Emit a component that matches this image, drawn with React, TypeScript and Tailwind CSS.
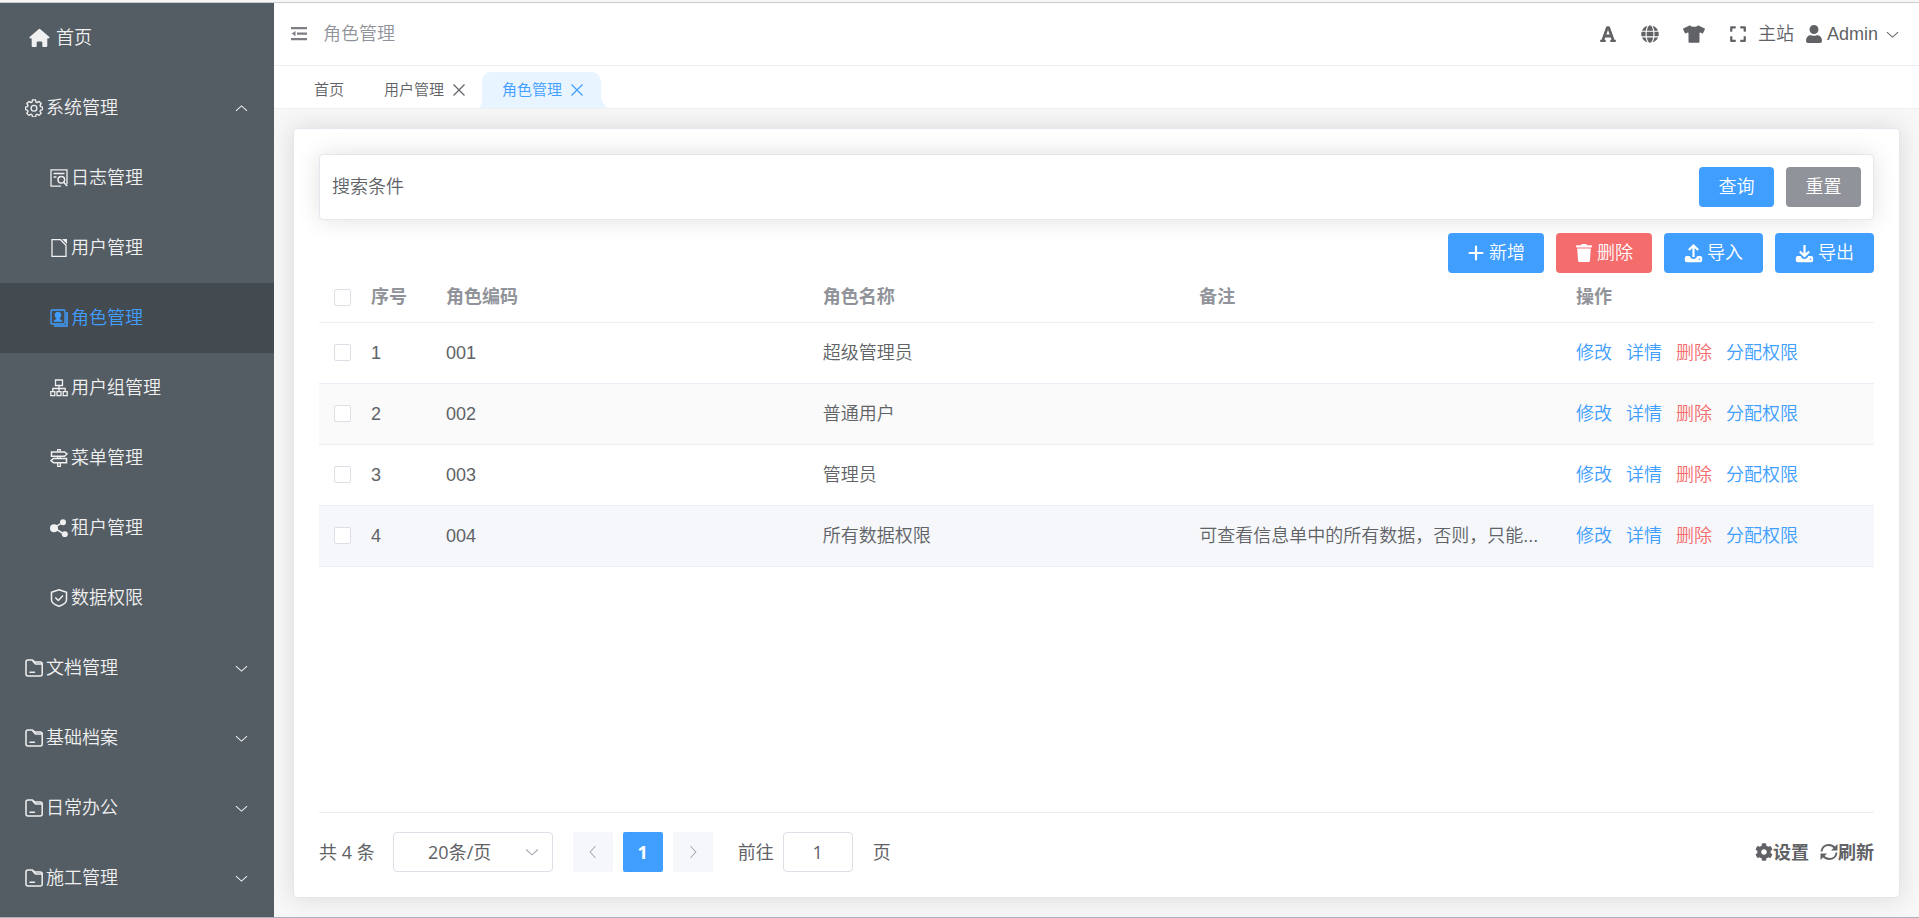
import type { ReactNode } from 'react';
import { FaFont, FaGlobe, FaTshirt, FaExpand, FaUser, FaTrash, FaCog } from 'react-icons/fa';

type IconProps = { className?: string };

const line = {
  viewBox: '0 0 18 18',
  fill: 'none',
  stroke: 'currentColor',
  strokeWidth: 1.3,
  'aria-hidden': true,
} as const;

function HomeIcon() {
  return (
    <svg viewBox="0 0 21 20" fill="currentColor" className="h-5 w-[21px]" aria-hidden>
      <path d="M9.6 1.2a1.4 1.4 0 0 1 1.8 0l8.7 7.6c.8.7.4 1.7-.6 1.7h-1.2v7.2c0 .9-.5 1.4-1.4 1.4h-2.6c-.6 0-1-.4-1-1v-3.4c0-.8-.5-1.3-1.2-1.3H9c-.8 0-1.3.5-1.3 1.3v3.4c0 .6-.4 1-1 1H4.1c-.9 0-1.4-.5-1.4-1.4v-7.2H1.500c-1 0-1.400-1-.6-1.700z" />
    </svg>
  );
}

function GearIcon() {
  return (
    <svg {...line} className="size-[18px]" viewBox="0 0 20 20" strokeWidth={1.5} strokeLinejoin="round">
      <path d="M8.300 1h3.400l.5 2.400 1.300.6 2.100-1.300 2.400 2.400-1.300 2.100.6 1.300 2.200.5v2.800l-2.200.6-.6 1.300 1.300 2.200-2.400 2.300-2.100-1.300-1.300.6-.5 2.300H8.300l-.5-2.300-1.300-.6-2.100 1.300L2 15.900l1.300-2.200-.6-1.300-2.200-.6V9l2.200-.5.6-1.300L2 5.100l2.400-2.400L6.500 4l1.300-.6z" />
      <circle cx="10" cy="10.300" r="3.200" />
    </svg>
  );
}

function LogIcon() {
  return (
    <svg {...line} className="size-[18px]">
      <path d="M11 17.200H1V.800h16v14.400" />
      <path d="M3.500 4.500h11M3.500 8h3" />
      <circle cx="11.300" cy="10.800" r="3.300" strokeWidth="1.500" />
      <path d="m13.600 13.300 3.600 3.700" strokeWidth="1.600" />
    </svg>
  );
}

function PageIcon() {
  return (
    <svg {...line} className="size-[18px]">
      <path d="M10.500.700H2v16.600h14V6.200z" />
      <path d="M12 0h5v5z" fill="currentColor" stroke="none" />
    </svg>
  );
}

function RoleIcon() {
  return (
    <svg {...line} className="size-[18px]">
      <rect x="1" y="1" width="14" height="14" rx="1" />
      <path d="M17 3v14H4" strokeWidth="1.600" />
      <path d="M8 2.800c2 0 3.300 1.400 3.300 3.300 0 1.600-.8 2.600-1.700 3.200l.2 1c1.200.3 2.400.9 2.600 2.400H3.600c.2-1.500 1.400-2.100 2.600-2.400l.2-1C5.500 8.700 4.700 7.700 4.700 6.100c0-1.900 1.300-3.300 3.300-3.300z" fill="currentColor" stroke="none" />
    </svg>
  );
}

function GroupIcon() {
  return (
    <svg {...line} className="size-[18px]">
      <path d="M5.500 1h7v5.500h-7zM9 6.500v3M2.800 12.500V9.500h12.400v3M9 9.500v3" />
      <path d="M.800 12.700h4v4h-4zM7 12.700h4v4H7zM13.200 12.700h4v4h-4z" />
    </svg>
  );
}

function SignIcon() {
  return (
    <svg {...line} className="size-[18px]">
      <path d="M1.500 3h13L17 5l-2.500 2.200h-13zM16.500 9.500H3.500L1 11.600l2.500 2.100h13z" strokeWidth="1.500" />
      <path d="M7.700 2.800V.700h2.600v2.100M7.700 7.200v2.300M10.300 7.200v2.300M7.700 13.700v3.600h2.600v-3.600" />
    </svg>
  );
}

function ShareIcon() {
  return (
    <svg {...line} className="size-[18px]">
      <path d="M13 3 4 9l10 6" strokeWidth="1.500" />
      <g fill="currentColor" stroke="none">
        <circle cx="4" cy="9.300" r="4" />
        <circle cx="13" cy="3.200" r="3" />
        <circle cx="14.800" cy="15.200" r="3" />
      </g>
    </svg>
  );
}

function ShieldIcon() {
  return (
    <svg {...line} className="size-[18px]" strokeWidth={1.5} strokeLinejoin="round">
      <path d="m9 .800 7.500 2.500v7.500c0 3-3.500 5.200-7.500 6.500-4-1.300-7.500-3.500-7.500-6.500V3.300z" />
      <path d="m5.300 8.500 3 3L13 6.500" />
    </svg>
  );
}

function FolderIcon() {
  return (
    <svg {...line} className="size-[18px]" strokeWidth={1.5} strokeLinejoin="round" strokeLinecap="round">
      <path d="M3 1h4.500l2.300 2h5.400a2 2 0 0 1 2 2v10a2 2 0 0 1-2 2H3a2 2 0 0 1-2-2V3a2 2 0 0 1 2-2z" />
      <path d="M8 2.300 10.500 5h6.200M5 13.200h4.500" />
    </svg>
  );
}

function Chevron({ className }: IconProps) {
  return (
    <svg viewBox="0 0 14 14" fill="none" stroke="currentColor" strokeWidth="1.100" className={className} aria-hidden>
      <path d="m1 4.500 6 5.300 6-5.300" />
    </svg>
  );
}

function CloseIcon() {
  return (
    <svg viewBox="0 0 14 14" fill="none" stroke="currentColor" strokeWidth="1.200" className="size-[14px]" aria-hidden>
      <path d="m1.500 1.500 11 11M12.500 1.500l-11 11" />
    </svg>
  );
}

function FoldIcon() {
  return (
    <svg viewBox="0 0 16 14" fill="currentColor" className="h-[14px] w-4" aria-hidden>
      <path d="M0 0h16v2.300H0zM6 5.500h10v2.300H6zM0 11h16v2.300H0zM4.500 4v5.300L.800 6.600z" />
    </svg>
  );
}

function PlusIcon() {
  return (
    <svg viewBox="0 0 18 18" fill="none" stroke="currentColor" strokeWidth="2.200" strokeLinecap="round" className="size-[18px]" aria-hidden>
      <path d="M9 2.500v13M2.500 9h13" />
    </svg>
  );
}

function TransferIcon({ up }: { up?: boolean }) {
  return (
    <svg viewBox="0 0 19 19" fill="none" stroke="currentColor" className="size-[19px]" aria-hidden>
      <path d="M2.800 12h3c.5 2 1.900 3 3.700 3s3.200-1 3.700-3h3a2 2 0 0 1 2 2v2.200a2 2 0 0 1-2 2H2.800a2 2 0 0 1-2-2V14a2 2 0 0 1 2-2z" fill="currentColor" stroke="none" />
      <path d={up ? 'M9.500 13V2M4.800 6l4.700-4.500L14.200 6' : 'M9.500 1v10.500M4.800 7.500l4.700 4.500 4.700-4.500'} strokeWidth="2.200" />
      <circle cx="15.500" cy="15.200" r=".8" fill="#409eff" stroke="none" />
    </svg>
  );
}

function RefreshIcon() {
  return (
    <svg viewBox="0 0 18 18" fill="none" stroke="currentColor" strokeWidth="2" className="size-[18px]" aria-hidden>
      <path d="M1.500 8.500C1.800 4.300 5 2 8.800 2c2.600 0 4.700 1 6.400 3.300M16.500 9.500c-.3 4.200-3.500 6.500-7.300 6.500-2.600 0-4.700-1-6.400-3.300" />
      <path d="M17.500 1v6.500H11zM.500 17v-6.500H7z" fill="currentColor" stroke="none" />
    </svg>
  );
}

type Item = { label: string; icon: ReactNode; active?: boolean };

const systemItems: Item[] = [
  { label: '日志管理', icon: <LogIcon /> },
  { label: '用户管理', icon: <PageIcon /> },
  { label: '角色管理', icon: <RoleIcon />, active: true },
  { label: '用户组管理', icon: <GroupIcon /> },
  { label: '菜单管理', icon: <SignIcon /> },
  { label: '租户管理', icon: <ShareIcon /> },
  { label: '数据权限', icon: <ShieldIcon /> },
];

const folders = ['文档管理', '基础档案', '日常办公', '施工管理'];

function GroupRow({ icon, label, open }: { icon: ReactNode; label: string; open?: boolean }) {
  return (
    <button type="button" aria-expanded={!!open} className="flex h-[70px] w-full shrink-0 items-center gap-[3px] pr-[26px] pl-[25px]">
      {icon}
      <span>{label}</span>
      <Chevron className={open ? 'ml-auto size-[13px] rotate-180' : 'ml-auto size-[13px]'} />
    </button>
  );
}

function Sidebar() {
  return (
    <nav className="flex w-[274px] shrink-0 flex-col overflow-hidden bg-[#545c64] text-[#f0f0f0]">
      <a href="#home" className="flex h-[70px] shrink-0 items-center gap-1.5 pl-[29px]">
        <HomeIcon />
        首页
      </a>
      <GroupRow icon={<GearIcon />} label="系统管理" open />
      {systemItems.map((item) => (
        <a
          key={item.label}
          href="#page"
          className={
            item.active
              ? 'flex h-[70px] shrink-0 items-center gap-[3px] bg-[#434a50] pl-[50px] text-[#409eff]'
              : 'flex h-[70px] shrink-0 items-center gap-[3px] pl-[50px]'
          }
        >
          {item.icon}
          {item.label}
        </a>
      ))}
      {folders.map((label) => (
        <GroupRow key={label} icon={<FolderIcon />} label={label} />
      ))}
    </nav>
  );
}

function TopBar() {
  return (
    <header className="flex h-[63px] shrink-0 items-center border-b border-[#ebeef5] bg-white pr-5 pl-[17px] text-[#606266]">
      <button type="button" aria-label="折叠菜单" className="text-[#7d7f84]">
        <FoldIcon />
      </button>
      <h1 className="ml-4 text-[#909399]">角色管理</h1>
      <div className="ml-auto flex items-center">
        <button type="button" aria-label="字体"><FaFont className="size-[18px]" /></button>
        <button type="button" aria-label="语言" className="ml-6"><FaGlobe className="size-[18px]" /></button>
        <button type="button" aria-label="主题" className="ml-6"><FaTshirt className="size-[22px]" /></button>
        <button type="button" aria-label="全屏" className="ml-6"><FaExpand className="size-[18px]" /></button>
        <a href="#site" className="ml-[11px]">主站</a>
        <button type="button" className="ml-[11px] flex items-center">
          <FaUser className="size-[18px]" />
          <span className="ml-1">Admin</span>
          <Chevron className="ml-2 size-[13px]" />
        </button>
      </div>
    </header>
  );
}

function Tabs() {
  return (
    <div className="flex h-[43px] shrink-0 items-end border-b border-[#f0f0f0] bg-white pl-5 text-[15px] text-[#606266]">
      <a href="#home" className="flex h-9 items-center px-5">首页</a>
      <div className="flex h-9 items-center gap-2 px-5">
        <a href="#users">用户管理</a>
        <button type="button" aria-label="关闭用户管理"><CloseIcon /></button>
      </div>
      <div className="relative -ml-[7px] flex h-9 items-center gap-2 px-[23px] text-[#409eff]">
        <svg viewBox="0 0 128 36" preserveAspectRatio="none" className="absolute inset-0 size-full" fill="#e8f4ff" aria-hidden>
          <path d="M0 36c2-2 3-5 3-9V10C3 4 7 0 13 0h99c6 0 10 4 10 10v15c1 4 3 8 6 11z" />
        </svg>
        <a href="#roles" className="relative">角色管理</a>
        <button type="button" aria-label="关闭角色管理" className="relative"><CloseIcon /></button>
      </div>
    </div>
  );
}

function CheckBox({ label }: { label: string }) {
  return (
    <input
      type="checkbox"
      aria-label={label}
      className="block size-[17px] appearance-none rounded-xs border border-[#dcdfe6] bg-white checked:bg-[#409eff]"
    />
  );
}

const rows = [
  { id: 1, code: '001', name: '超级管理员', note: '', bg: 'bg-white' },
  { id: 2, code: '002', name: '普通用户', note: '', bg: 'bg-[#fafafa]' },
  { id: 3, code: '003', name: '管理员', note: '', bg: 'bg-white' },
  { id: 4, code: '004', name: '所有数据权限', note: '可查看信息单中的所有数据，否则，只能...', bg: 'bg-[#f5f7fa]' },
];

function RoleTable() {
  return (
    <table className="w-full table-fixed border-collapse text-left">
      <colgroup>
        <col className="w-10" />
        <col className="w-[75px]" />
        <col />
        <col />
        <col />
        <col className="w-[310px]" />
      </colgroup>
      <thead>
        <tr className="h-[49px] border-b border-[#ebeef5] text-[#909399]">
          <th className="pl-[15px]"><CheckBox label="全选" /></th>
          <th className="px-3 font-bold">序号</th>
          <th className="px-3 font-bold">角色编码</th>
          <th className="px-3 font-bold">角色名称</th>
          <th className="px-3 font-bold">备注</th>
          <th className="px-3 font-bold">操作</th>
        </tr>
      </thead>
      <tbody>
        {rows.map((row) => (
          <tr key={row.id} className={`h-[61px] border-b border-[#ebeef5] ${row.bg}`}>
            <td className="pl-[15px]"><CheckBox label={`选择${row.name}`} /></td>
            <td className="px-3">{row.id}</td>
            <td className="px-3">{row.code}</td>
            <td className="px-3">{row.name}</td>
            <td className="px-3">{row.note}</td>
            <td className="px-3">
              <div className="flex gap-[14px] text-[#409eff]">
                <a href="#edit">修改</a>
                <a href="#detail">详情</a>
                <a href="#delete" className="text-[#f56c6c]">删除</a>
                <a href="#grant">分配权限</a>
              </div>
            </td>
          </tr>
        ))}
      </tbody>
    </table>
  );
}

function Pager() {
  return (
    <footer className="flex items-center border-t border-[#ebeef5] pt-[19px] font-['Open_Sans','Noto_Sans_CJK_SC',sans-serif] font-normal">
      <span>共 4 条</span>
      <div className="relative ml-[18px]">
        <select aria-label="每页条数" className="h-10 w-40 appearance-none rounded border border-[#dcdfe6] bg-white pr-[54px] pl-7 text-center">
          <option>20条/页</option>
        </select>
        <Chevron className="pointer-events-none absolute top-[13px] right-[14px] size-[14px] text-[#a8abb2]" />
      </div>
      <div className="ml-5 flex gap-[10px]">
        <button type="button" aria-label="上一页" className="flex size-10 items-center justify-center rounded-xs bg-[#f5f7fa] text-[#a8abb2]">
          <Chevron className="size-[14px] rotate-90" />
        </button>
        <button type="button" className="size-10 rounded-xs bg-[#409eff] font-bold text-white">1</button>
        <button type="button" aria-label="下一页" className="flex size-10 items-center justify-center rounded-xs bg-[#f5f7fa] text-[#a8abb2]">
          <Chevron className="size-[14px] -rotate-90" />
        </button>
      </div>
      <label className="ml-[25px] flex items-center gap-[9px]">
        前往
        <input type="text" defaultValue="1" className="h-10 w-[70px] rounded border border-[#dcdfe6] text-center" />
      </label>
      <span className="ml-5">页</span>
      <div className="ml-auto flex gap-[11px] font-bold">
        <button type="button" className="flex items-center"><FaCog className="size-[18px]" />设置</button>
        <button type="button" className="flex items-center"><RefreshIcon />刷新</button>
      </div>
    </footer>
  );
}

export default function App() {
  return (
    <div className="flex h-screen flex-col border-b border-[#a9b1bd] bg-[#f7f7f7] pt-0.5 font-['Liberation_Sans','Noto_Sans_CJK_SC',sans-serif] text-[18px] leading-6 font-[350] text-[#606266]">
      <div className="flex min-h-0 flex-1 border-t border-[#cccccc]">
        <Sidebar />
        <div className="flex min-w-0 flex-1 flex-col">
          <TopBar />
          <Tabs />
          <main className="flex min-h-0 flex-1 overflow-hidden p-[19px]">
            <section className="flex min-w-0 flex-1 flex-col rounded border border-[#e4e7ed] bg-white p-[25px] shadow-[0_0_24px_rgba(0,0,0,0.12)]">
              <div className="flex items-center gap-3 rounded border border-[#e4e7ed] bg-white p-3 shadow-[0_0_24px_rgba(0,0,0,0.12)]">
                <span className="mr-auto">搜索条件</span>
                <button type="button" className="h-10 w-[75px] rounded bg-[#409eff] text-white">查询</button>
                <button type="button" className="h-10 w-[75px] rounded bg-[#909399] text-white">重置</button>
              </div>
              <div className="mt-[13px] flex justify-end gap-3 text-white">
                <button type="button" className="flex h-10 items-center gap-1 rounded bg-[#409eff] px-[19px]"><PlusIcon />新增</button>
                <button type="button" className="flex h-10 items-center gap-1 rounded bg-[#f56c6c] px-[19px]"><FaTrash className="size-[18px]" />删除</button>
                <button type="button" className="flex h-10 items-center gap-1 rounded bg-[#409eff] px-5"><TransferIcon up />导入</button>
                <button type="button" className="flex h-10 items-center gap-1 rounded bg-[#409eff] px-5"><TransferIcon />导出</button>
              </div>
              <div className="min-h-0 flex-1">
                <RoleTable />
              </div>
              <Pager />
            </section>
          </main>
        </div>
      </div>
    </div>
  );
}
